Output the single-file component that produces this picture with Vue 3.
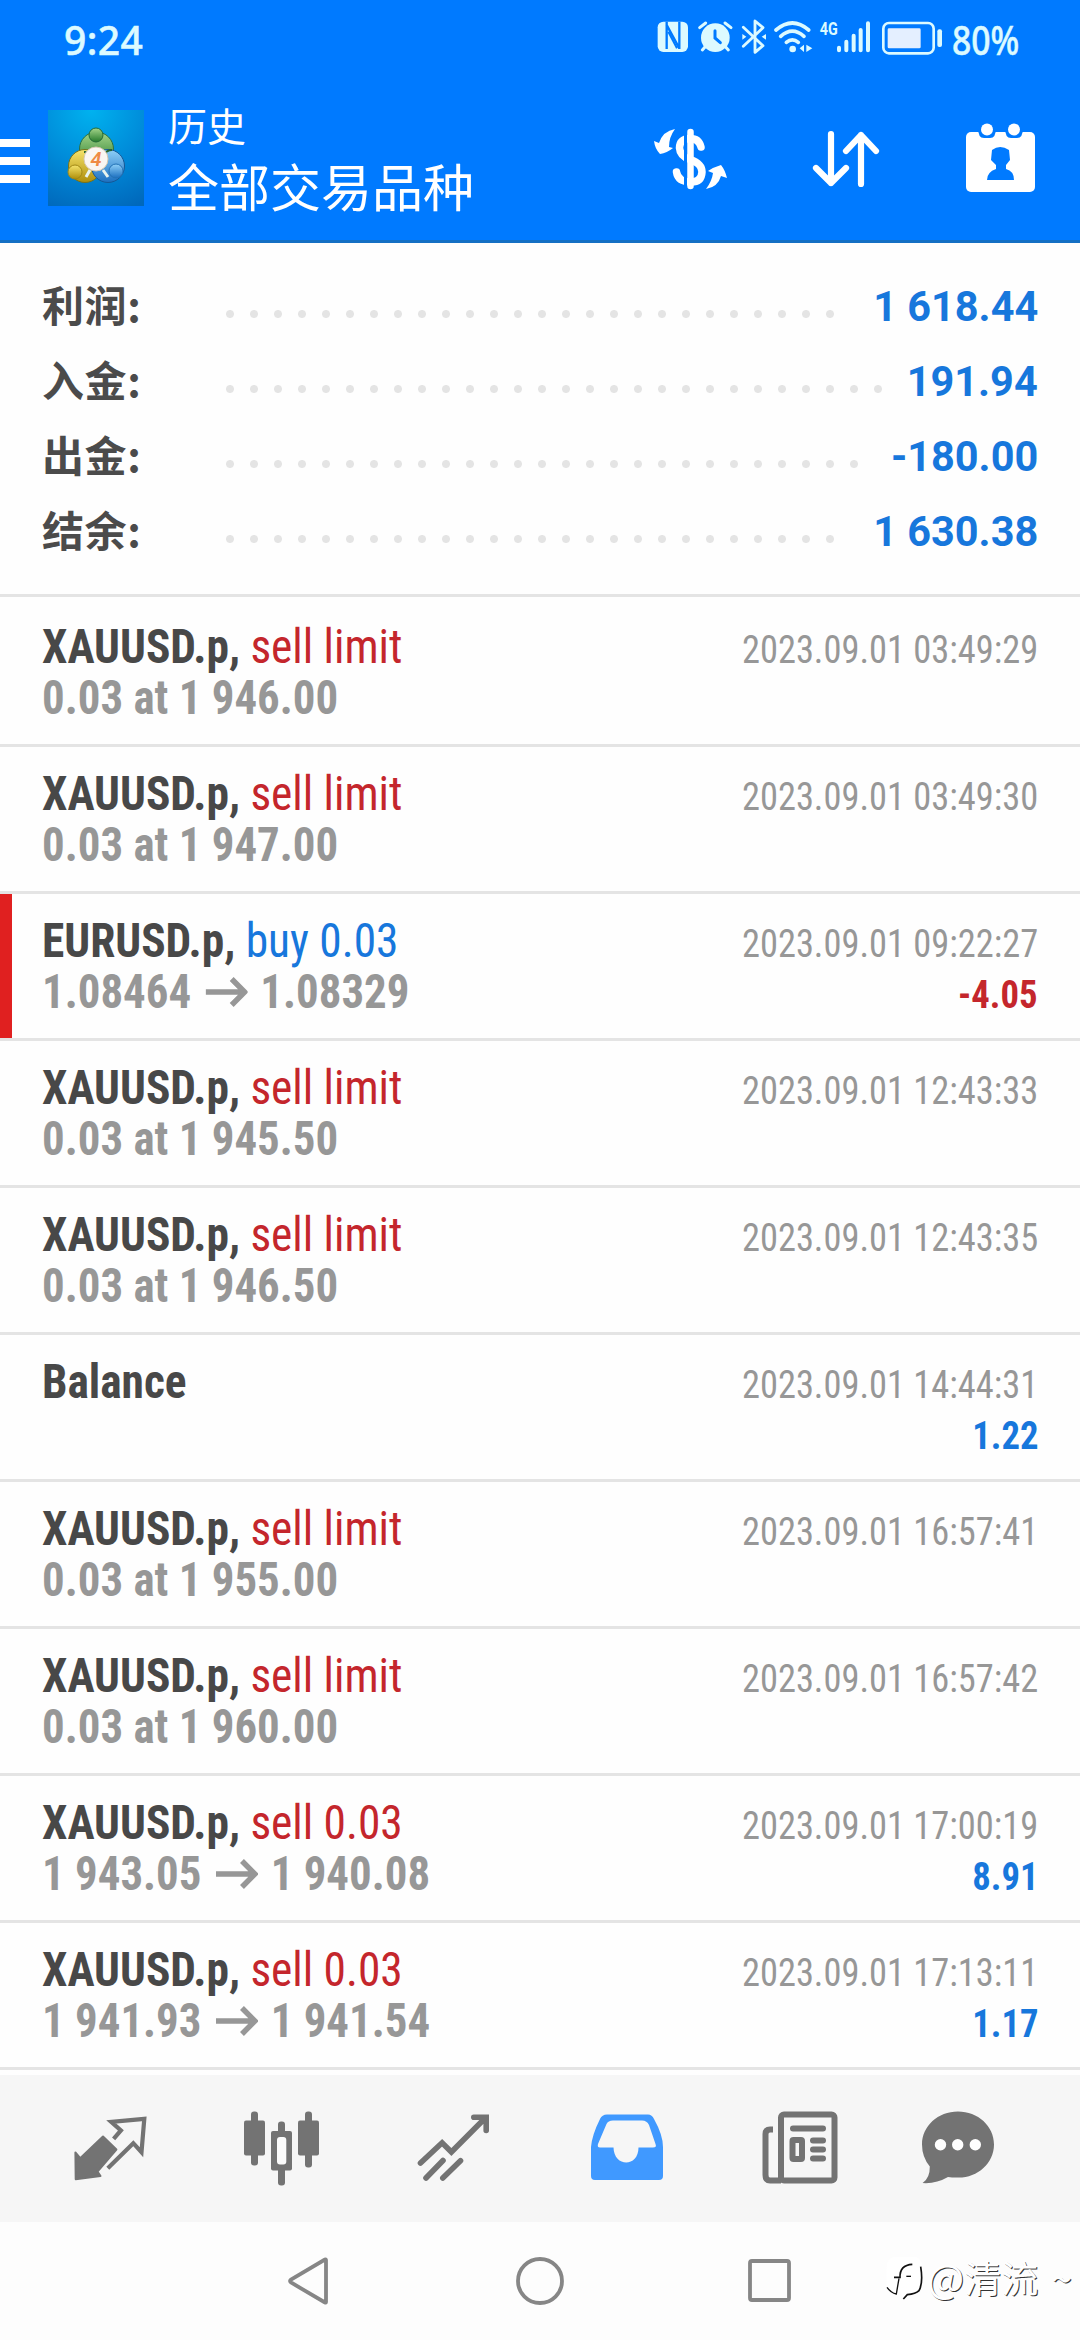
<script setup>
const summary = [
  { label: '利润:', dots: 26, value: '1 618.44' },
  { label: '入金:', dots: 28, value: '191.94' },
  { label: '出金:', dots: 27, value: '-180.00' },
  { label: '结余:', dots: 26, value: '1 630.38' },
]

const limit = (price, time) => ({
  symbol: 'XAUUSD.p,', action: 'sell limit', side: 'sell', detail: `0.03 at ${price}`, time: `2023.09.01 ${time}`,
})

const orders = [
  limit('1 946.00', '03:49:29'),
  limit('1 947.00', '03:49:30'),
  { symbol: 'EURUSD.p,', action: 'buy 0.03', side: 'buy', detail: '1.08464', close: '1.08329', time: '2023.09.01 09:22:27', profit: '-4.05', flagged: true },
  limit('1 945.50', '12:43:33'),
  limit('1 946.50', '12:43:35'),
  { symbol: 'Balance', time: '2023.09.01 14:44:31', profit: '1.22' },
  limit('1 955.00', '16:57:41'),
  limit('1 960.00', '16:57:42'),
  { symbol: 'XAUUSD.p,', action: 'sell 0.03', side: 'sell', detail: '1 943.05', close: '1 940.08', time: '2023.09.01 17:00:19', profit: '8.91' },
  { symbol: 'XAUUSD.p,', action: 'sell 0.03', side: 'sell', detail: '1 941.93', close: '1 941.54', time: '2023.09.01 17:13:11', profit: '1.17' },
]
</script>

<template>
  <div class="screen">
    <header class="header">
      <div class="status">
        <span class="clock">9:24</span>
        <svg class="status-icons" viewBox="50 55 861 114">
          <g fill="#dcfaff">
            <rect x="52" y="66" width="91" height="91" rx="17" />
            <path d="M79 66 V148 M78 74 L117 146 M117 66 V148" fill="none" stroke="#007aff" stroke-width="7" />
            <path d="M84 96 L110 146" fill="none" stroke="#007aff" stroke-width="6" />
            <circle cx="225" cy="114" r="43" />
            <path d="M178 84 L196 70 M272 84 L254 70 M194 142 L186 151 M256 142 L264 151" stroke="#dcfaff" stroke-width="9" stroke-linecap="round" />
            <path d="M224 93 V115 L240 129" fill="none" stroke="#007aff" stroke-width="9" stroke-linecap="round" />
            <path d="M309 83 L368 138 L344 158 V64 L368 84 L309 140" fill="none" stroke="#dcfaff" stroke-width="8.500" stroke-linejoin="round" stroke-linecap="round" />
            <path d="M306 103 L318 111 L306 120 Z M377 103 L364 111 L377 120 Z" />
            <g fill="none" stroke="#dcfaff" stroke-width="11" stroke-linecap="round">
              <path d="M407 91 Q456 49 505 91" />
              <path d="M421 110 Q456 79 491 110" />
              <path d="M438 128 Q456 113 474 128" />
            </g>
            <circle cx="457" cy="148" r="10" />
            <path d="M478 146 L491 135 V157 Z M516 146 L498 135 V157 Z" />
            <text x="538" y="107" font-size="57" font-weight="700" textLength="54" lengthAdjust="spacingAndGlyphs">4G</text>
            <path d="M596 144 V152 M618 126 V152 M640 108 V152 M661 91 V152 M683 71 V152" stroke="#dcfaff" stroke-width="12" stroke-linecap="round" />
            <rect x="729" y="70" width="151" height="91" rx="17" fill="none" stroke="#dcfaff" stroke-width="8" />
            <rect x="742" y="86" width="99" height="60" rx="4" fill="#e4efff" />
            <rect x="891" y="89" width="14" height="53" rx="6" />
          </g>
        </svg>
        <span class="percent">80%</span>
      </div>

      <div class="toolbar">
        <div class="menu"><i></i><i></i><i></i></div>
        <svg class="logo" viewBox="0 0 96 96">
          <defs>
            <radialGradient id="sky" cx=".45" cy="0" r="1.1">
              <stop offset="0" stop-color="#00b2ef" />
              <stop offset=".55" stop-color="#0089d8" />
              <stop offset="1" stop-color="#0068bb" />
            </radialGradient>
            <linearGradient id="green" x2="0" y2="1"><stop stop-color="#a5d68b" /><stop offset="1" stop-color="#267a2b" /></linearGradient>
            <linearGradient id="yellow" x2="0" y2="1"><stop stop-color="#f6e46c" /><stop offset="1" stop-color="#ae8e0a" /></linearGradient>
            <linearGradient id="blue" x2="0" y2="1"><stop stop-color="#8fd0f8" /><stop offset="1" stop-color="#1b6fc0" /></linearGradient>
          </defs>
          <rect width="96" height="96" fill="url(#sky)" />
          <g stroke-width="1">
            <circle cx="48.500" cy="39" r="17" fill="url(#green)" stroke="#2c7040" />
            <circle cx="37" cy="56" r="16.500" fill="url(#yellow)" stroke="#75711b" />
            <circle cx="60" cy="56" r="16.500" fill="url(#blue)" stroke="#155896" />
            <path d="M36 42 Q48 42 54 58 M64 40 Q54 40 48 60" fill="none" stroke="#28642d" stroke-width="2" />
            <circle cx="48" cy="25" r="7" fill="url(#green)" stroke="#246a37" />
            <circle cx="27" cy="62" r="7" fill="url(#yellow)" stroke="#a18916" />
            <circle cx="68" cy="61" r="7" fill="url(#blue)" stroke="#2372b6" />
            <path d="M42 60 L38 67 M55 60 L60 67" stroke="#e8f3ee" stroke-width="3" />
          </g>
          <circle cx="48" cy="49" r="12" fill="#faf6f2" stroke="#d6c8b2" />
          <text x="48" y="56" text-anchor="middle" font-size="20" font-weight="600" font-style="italic" fill="#ef8b45">4</text>
        </svg>
        <div class="titles">
          <span class="kicker">历史</span>
          <span class="title">全部交易品种</span>
        </div>
        <svg class="action currency" viewBox="0 0 74 64">
          <path d="M47 19 Q45 10.500 36 10.500 Q25.500 11 25.500 20 Q26 28 36 31.500 Q48 35.500 48 44 Q47.500 54 37 54 Q24 54 22.500 44" fill="none" stroke="#fff" stroke-width="7.500" stroke-linecap="round" />
          <path d="M31.500 0 V64" stroke="#007aff" stroke-width="3" />
          <path d="M36.500 4 V58" stroke="#fff" stroke-width="6.500" stroke-linecap="round" />
          <path d="M21 1 Q9 3 5 15 L0 13 Q1 21 6 26 Q13 25 19 20 L15 19 Q15 9 21 1 Z M52 61 Q64 59 67 48 L73 50 Q71 42 67 37 Q60 39 54 43 L59 45 Q58 53 52 61 Z" fill="#fff" />
        </svg>
        <svg class="action sort" viewBox="0 0 68 58">
          <path d="M19 4 V53 M4 38 L19 53 L34 38 M49 54 V5 M34 21 L49 5 L64 21" fill="none" stroke="#fff" stroke-width="6.200" stroke-linecap="round" stroke-linejoin="round" />
        </svg>
        <svg class="action calendar" viewBox="0 0 70 70">
          <rect y="9" width="69" height="60" rx="5" fill="#fff" />
          <path d="M12 5 Q12 15 18 15 H24 Q30 15 30 5 Z M39 5 Q39 15 45 15 H51 Q57 15 57 5 Z" fill="#007aff" />
          <circle cx="21" cy="6.500" r="6" fill="#fff" />
          <circle cx="48" cy="6.500" r="6" fill="#fff" />
          <path d="M26 27 Q34 21 43 27 L44 37 L40 42 V46 Q48 48 48 57 H21 Q21 49 30 46 V42 L25 37 Z" fill="#007aff" />
        </svg>
      </div>
    </header>

    <section class="summary">
      <div v-for="row in summary" :key="row.label" class="summary-row">
        <span class="label">{{ row.label }}</span>
        <span class="leader" :style="{ width: row.dots * 24 + 'px' }"></span>
        <span class="amount">{{ row.value }}</span>
      </div>
    </section>

    <main class="orders">
      <article v-for="order in orders" :key="order.time" class="order" :class="{ flagged: order.flagged }">
        <div class="line">
          <span class="name"><b>{{ order.symbol }}</b><span v-if="order.action" class="side" :class="order.side">{{ order.action }}</span></span>
          <span class="time">{{ order.time }}</span>
        </div>
        <div class="line">
          <span v-if="order.detail" class="detail">
            <span>{{ order.detail }}</span>
            <template v-if="order.close">
              <svg class="arrow" viewBox="0 0 42 30" preserveAspectRatio="none"><path d="M0 15 H38 M26 2 L39 15 L26 28" fill="none" stroke="#979797" stroke-width="5.500" /></svg>
              <span>{{ order.close }}</span>
            </template>
          </span>
          <span v-if="order.profit" class="profit" :class="{ loss: order.profit.startsWith('-') }">{{ order.profit }}</span>
        </div>
      </article>
    </main>

    <nav class="tabs">
      <div class="tab">
        <svg viewBox="0 0 80 80">
          <path d="M43.600 29.800 L50.900 21.500 L41.200 12.800 L74.300 9.800 L71.500 43.200 L63.300 34.200 L37.800 59.200" fill="none" stroke="#737373" stroke-width="4.200" />
          <path d="M33 27.500 L46.400 40.500 L27.500 62.500 L30.500 67 L5.700 70.200 L5.400 43.500 L10.200 49.200 Z" fill="#737373" stroke="#737373" stroke-width="2" stroke-linejoin="round" />
        </svg>
      </div>
      <div class="tab">
        <svg viewBox="0 0 80 80">
          <g fill="#737373">
            <rect x="2" y="11.500" width="21" height="35" rx="2" /><rect x="9" y="2.500" width="7" height="54" rx="3" />
            <rect x="36" y="12.500" width="7" height="64" rx="3" /><rect x="29" y="22" width="21" height="39.500" rx="2" />
            <rect x="35" y="28" width="9.300" height="27.500" rx="3" fill="#fbfbfb" />
            <rect x="56" y="11.500" width="21" height="35" rx="2" /><rect x="63" y="2.500" width="7" height="56" rx="3" />
          </g>
        </svg>
      </div>
      <div class="tab">
        <svg viewBox="0 0 80 80">
          <path d="M6.500 54 L28.100 33.800 L37.400 43 L71.500 8.800 M59.800 8.200 H72.200 V21.500 M12 69 L29 51.500 M28.800 69 L46.500 51.800" fill="none" stroke="#737373" stroke-width="5.600" stroke-linecap="round" />
        </svg>
      </div>
      <div class="tab">
        <svg viewBox="0 0 80 80">
          <path fill-rule="evenodd" d="M21 5.500 H62 Q66 5.500 68 10 Q77 26 77 38 V67 Q77 71 73 71 H9 Q5 71 5 67 V38 Q6 26 14 10 Q16 5.500 21 5.500 Z M27 11.500 Q22 11.500 20.500 15 L12 35 Q11 38.500 14 38.500 H27.500 C28 58.500 52.500 58.500 52.500 38.500 H67 Q71 38.500 69.500 35 L63 16 Q61 11.500 56 11.500 Z" fill="#4099ff" />
        </svg>
      </div>
      <div class="tab">
        <svg viewBox="0 0 80 80">
          <g fill="none" stroke="#737373" stroke-width="6">
            <rect x="23" y="5.500" width="53.500" height="66" rx="3" />
            <path d="M15 20.500 H12 Q7.500 20.500 7.500 25 V66 Q7.500 71.500 12 71.500 H23" />
            <path d="M35 19.500 H65 M55 31.500 H65 M55 40.500 H65 M55 49.500 H65" stroke-linecap="round" />
            <rect x="34.500" y="31" width="9.500" height="19" rx="1" />
          </g>
        </svg>
      </div>
      <div class="tab chat">
        <svg viewBox="0 0 80 80">
          <path d="M39.900 2.500 C60 2.500 76 17 76 35.500 C76 55 58 70 38 68.500 Q34 68.500 30 68 Q18 75 4.600 74 Q12 69 11.800 57.500 Q4 48 4 35.500 C4 17 20 2.500 39.900 2.500 Z" fill="#737373" />
          <g fill="#fff"><circle cx="22.500" cy="35.800" r="5.700" /><circle cx="39.700" cy="35.800" r="5.700" /><circle cx="57.300" cy="35.800" r="5.700" /></g>
        </svg>
      </div>
    </nav>

    <footer class="system-nav">
      <svg viewBox="0 0 60 60"><path d="M46 9 V51 Q46 52 45 51.500 L11 31.500 Q9 30 11 28.500 L45 8.500 Q46 8 46 9 Z" /></svg>
      <svg viewBox="0 0 60 60"><circle cx="30" cy="30" r="22" /></svg>
      <svg viewBox="0 0 60 60"><rect x="10" y="10" width="39" height="39" rx="2" /></svg>
      <div class="watermark">
        <svg viewBox="0 0 117 141">
          <path d="M30 5 H90 Q112 10 112 40 V80 Q110 108 66 118 L54 134 L48 112 Q12 116 5 96 V35 Q6 8 30 5 Z" fill="#fff" />
          <g fill="none" stroke="#111" stroke-width="5">
            <path d="M27 67 H45 Q44 30 82 28" />
            <path d="M64 64 H78" stroke-width="4" />
            <path d="M42 70 L34 117 Q18 114 6 97" stroke-width="4" />
            <path d="M107 35 Q115 84 102 107 Q92 117 67 119 L55 132" />
          </g>
        </svg>
        <span><span class="at">@</span>清流 ~</span>
      </div>
    </footer>
  </div>
</template>

<style>
body {
  margin: 0;
  background: #fdfdfd;
}
</style>

<style scoped>
.screen {
  width: 1080px;
  height: 2340px;
  display: flex;
  flex-direction: column;
  overflow: hidden;
  background: #fefefe;
  font-family: Roboto, 'Noto Sans CJK SC', sans-serif;
}
.header {
  box-sizing: border-box;
  height: 243px;
  background: #007aff;
  border-bottom: 3px solid #1470c4;
}
.status {
  display: flex;
  align-items: center;
  height: 80px;
  padding-left: 64px;
  color: #dcfaff;
  font: 500 39px/80px 'Noto Sans', sans-serif;
  -webkit-text-stroke: 0.5px #dcfaff;
}
.clock {
  width: 593px;
  letter-spacing: 0.4px;
}
.status-icons {
  width: 287px;
  height: 38px;
  margin-top: -6px;
  font-family: Roboto, sans-serif;
  -webkit-text-stroke: 0;
}
.percent {
  margin-left: 8px;
  transform: scaleX(0.865);
  transform-origin: left;
}
.toolbar {
  display: flex;
  align-items: flex-start;
  height: 160px;
}
.menu {
  display: flex;
  flex-direction: column;
  gap: 10px;
  width: 30px;
  margin: 59px 18px 0 0;
}
.menu i {
  height: 8px;
  background: #fff;
}
.logo {
  width: 96px;
  height: 96px;
  margin: 30px 24px 0 0;
}
.titles {
  display: flex;
  flex-direction: column;
  width: 486px;
  margin-top: 24px;
  color: #fff;
}
.kicker {
  font-size: 39px;
  line-height: 48px;
}
.title {
  font-size: 51px;
  line-height: 75px;
}
.currency {
  width: 74px;
  height: 64px;
  margin-top: 48px;
}
.sort {
  width: 68px;
  height: 58px;
  margin: 50px 0 0 84px;
}
.calendar {
  width: 70px;
  height: 70px;
  margin: 43px 0 0 86px;
}
.summary {
  box-sizing: border-box;
  height: 354px;
  padding: 22px 42px 0 42px;
  border-bottom: 3px solid #e4e4e4;
}
.summary-row {
  display: flex;
  align-items: baseline;
  height: 75px;
  font-size: 42px;
  font-weight: 700;
  line-height: 75px;
}
.label {
  width: 176px;
  color: #4b4b4b;
  font-family: 'Noto Sans CJK SC', sans-serif;
  letter-spacing: 0.6px;
  transform: translateY(1px);
}
.leader {
  align-self: flex-start;
  height: 16px;
  margin-top: 41px;
  background: radial-gradient(circle, #e4e4e4 3.5px, transparent 4.5px) 0 0 / 24px 16px;
}
.amount {
  margin-left: auto;
  color: #1777dc;
  transform: scaleX(0.987);
  transform-origin: right;
}
.orders {
  padding: 3px 0 5px;
}
.order {
  box-sizing: border-box;
  height: 147px;
  padding: 21px 42px 0 42px;
  border-bottom: 3px solid #e4e4e4;
  font-stretch: 75%;
}
.flagged {
  background: linear-gradient(90deg, #e02020 12px, transparent 12px);
}
.line {
  display: flex;
  align-items: baseline;
  height: 51px;
  font-size: 48px;
  line-height: 51px;
}
/* keeps every line on the same baseline, with or without a left-hand text */
.line::before {
  content: '\200b';
  width: 0;
}
.name {
  transform: scaleX(0.945);
  transform-origin: left;
}
.name b {
  color: #484848;
}
.side {
  margin-left: 11px;
}
.sell {
  color: #c4262c;
}
.buy {
  color: #1777dc;
}
.time {
  margin-left: auto;
  color: #979797;
  font-size: 39px;
  transform: scaleX(0.934);
  transform-origin: right;
}
.detail {
  display: flex;
  align-items: center;
  color: #979797;
  font-weight: 700;
  transform: scaleX(0.935);
  transform-origin: left;
}
.arrow {
  width: 45px;
  height: 30px;
  margin: 0 14px 0 15px;
}
.profit {
  margin-left: auto;
  color: #1777dc;
  font-size: 39px;
  font-weight: 700;
  transform: scaleX(0.94);
  transform-origin: right;
}
.loss {
  color: #c4262c;
}
.tabs {
  box-sizing: border-box;
  display: flex;
  align-items: center;
  height: 147px;
  padding: 0 24px;
  background: #f6f6f6;
}
.tab {
  display: flex;
  justify-content: center;
  width: 172px;
}
.tab svg {
  width: 80px;
  height: 80px;
}
.chat svg {
  margin-right: 24px;
}
.system-nav {
  position: relative;
  display: flex;
  align-items: center;
  justify-content: center;
  gap: 170px;
  height: 118px;
  background: #fdfdfd;
}
.system-nav > svg {
  width: 60px;
  height: 60px;
  fill: none;
  stroke: #868686;
  stroke-width: 3.8;
}
.watermark {
  position: absolute;
  right: 8px;
  top: 28px;
  display: flex;
  align-items: center;
  gap: 3px;
  color: #fff;
  font: 37px/50px 'Noto Sans CJK SC', sans-serif;
  text-shadow: 1px 1px 0.5px #333;
  word-spacing: 5px;
}
.watermark svg {
  width: 39px;
  height: 47px;
  margin-top: 5px;
}
.at {
  font-size: 39px;
}
</style>
